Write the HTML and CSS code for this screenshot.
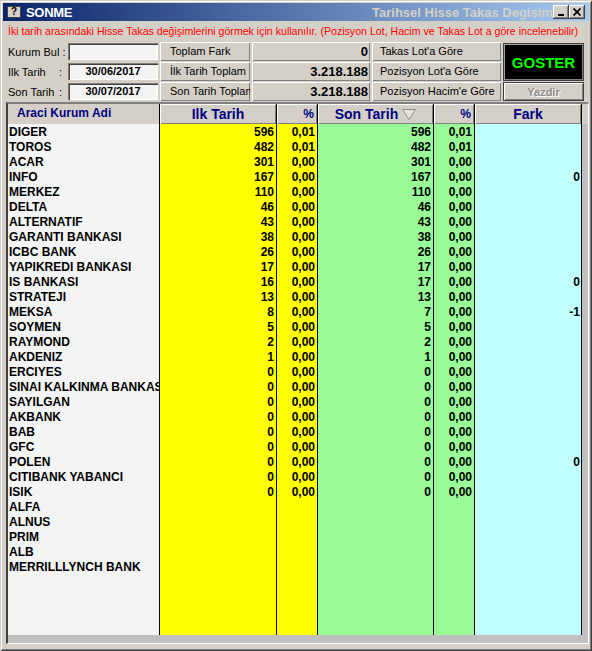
FILE: index.html
```html
<!DOCTYPE html>
<html lang="tr">
<head>
<meta charset="utf-8">
<title>SONME</title>
<link rel="stylesheet" href="styles.css">
</head>
<body>
<div class="window">
  <div class="titlebar">
    <div class="icon-wrap"><span class="app-icon">?</span></div>
    <span class="title">SONME</span>
    <span class="subtitle">Tarihsel Hisse Takas Degisimi</span>
    <div class="controls">
      <span class="ctl"><svg width="8" height="8" viewBox="0 0 8 8"><rect x="1" y="6" width="6" height="2" fill="#000"/></svg></span>
      <span class="ctl"><svg width="8" height="8" viewBox="0 0 8 8"><path d="M0.5 0.5L7.5 7.5M7.5 0.5L0.5 7.5" stroke="#000" stroke-width="1.7"/></svg></span>
    </div>
  </div>

  <p class="hint">İki tarih arasındaki Hisse Takas değişimlerini görmek için kullanılır. (Pozisyon Lot, Hacim ve Takas Lot a göre incelenebilir)</p>

  <div class="form">
    <span class="label">Kurum Bul :</span>
    <span class="field"></span>
    <span class="btn">Toplam Fark</span>
    <span class="value">0</span>
    <span class="btn btn-r">Takas Lot'a Göre</span>
    <span class="btn-go">GOSTER</span>

    <span class="label"><span class="label-text">Ilk Tarih</span>:</span>
    <span class="field">30/06/2017</span>
    <span class="btn">İlk Tarih Toplam</span>
    <span class="value">3.218.188</span>
    <span class="btn btn-r">Pozisyon Lot'a Göre</span>

    <span class="label"><span class="label-text">Son Tarih</span>:</span>
    <span class="field">30/07/2017</span>
    <span class="btn">Son Tarih Toplam</span>
    <span class="value">3.218.188</span>
    <span class="btn btn-r">Pozisyon Hacim'e Göre</span>
    <span class="btn-print">Yazdir</span>
  </div>

  <div class="grid">
    <div class="head">
      <span class="h-name">Araci Kurum Adi</span>
      <span class="hcell">Ilk Tarih</span>
      <span class="hcell pct">%</span>
      <span class="hcell">Son Tarih <svg class="sort" width="14" height="11" viewBox="0 0 14 11"><polygon points="0.5,0.5 13.5,0.5 7,10.5" fill="#e4e2dc" stroke="#8c8c8c"/></svg></span>
      <span class="hcell pct">%</span>
      <span class="hcell fark">Fark</span>
    </div>
    <div class="body">
      <div class="row"><span class="c-name">DIGER</span><span class="c-ilk">596</span><span class="c-ilk">0,01</span><span class="c-son">596</span><span class="c-son">0,01</span><span class="c-fark"></span></div>
      <div class="row"><span class="c-name">TOROS</span><span class="c-ilk">482</span><span class="c-ilk">0,01</span><span class="c-son">482</span><span class="c-son">0,01</span><span class="c-fark"></span></div>
      <div class="row"><span class="c-name">ACAR</span><span class="c-ilk">301</span><span class="c-ilk">0,00</span><span class="c-son">301</span><span class="c-son">0,00</span><span class="c-fark"></span></div>
      <div class="row"><span class="c-name">INFO</span><span class="c-ilk">167</span><span class="c-ilk">0,00</span><span class="c-son">167</span><span class="c-son">0,00</span><span class="c-fark">0</span></div>
      <div class="row"><span class="c-name">MERKEZ</span><span class="c-ilk">110</span><span class="c-ilk">0,00</span><span class="c-son">110</span><span class="c-son">0,00</span><span class="c-fark"></span></div>
      <div class="row"><span class="c-name">DELTA</span><span class="c-ilk">46</span><span class="c-ilk">0,00</span><span class="c-son">46</span><span class="c-son">0,00</span><span class="c-fark"></span></div>
      <div class="row"><span class="c-name">ALTERNATIF</span><span class="c-ilk">43</span><span class="c-ilk">0,00</span><span class="c-son">43</span><span class="c-son">0,00</span><span class="c-fark"></span></div>
      <div class="row"><span class="c-name">GARANTI BANKASI</span><span class="c-ilk">38</span><span class="c-ilk">0,00</span><span class="c-son">38</span><span class="c-son">0,00</span><span class="c-fark"></span></div>
      <div class="row"><span class="c-name">ICBC BANK</span><span class="c-ilk">26</span><span class="c-ilk">0,00</span><span class="c-son">26</span><span class="c-son">0,00</span><span class="c-fark"></span></div>
      <div class="row"><span class="c-name">YAPIKREDI BANKASI</span><span class="c-ilk">17</span><span class="c-ilk">0,00</span><span class="c-son">17</span><span class="c-son">0,00</span><span class="c-fark"></span></div>
      <div class="row"><span class="c-name">IS BANKASI</span><span class="c-ilk">16</span><span class="c-ilk">0,00</span><span class="c-son">17</span><span class="c-son">0,00</span><span class="c-fark">0</span></div>
      <div class="row"><span class="c-name">STRATEJI</span><span class="c-ilk">13</span><span class="c-ilk">0,00</span><span class="c-son">13</span><span class="c-son">0,00</span><span class="c-fark"></span></div>
      <div class="row"><span class="c-name">MEKSA</span><span class="c-ilk">8</span><span class="c-ilk">0,00</span><span class="c-son">7</span><span class="c-son">0,00</span><span class="c-fark">-1</span></div>
      <div class="row"><span class="c-name">SOYMEN</span><span class="c-ilk">5</span><span class="c-ilk">0,00</span><span class="c-son">5</span><span class="c-son">0,00</span><span class="c-fark"></span></div>
      <div class="row"><span class="c-name">RAYMOND</span><span class="c-ilk">2</span><span class="c-ilk">0,00</span><span class="c-son">2</span><span class="c-son">0,00</span><span class="c-fark"></span></div>
      <div class="row"><span class="c-name">AKDENIZ</span><span class="c-ilk">1</span><span class="c-ilk">0,00</span><span class="c-son">1</span><span class="c-son">0,00</span><span class="c-fark"></span></div>
      <div class="row"><span class="c-name">ERCIYES</span><span class="c-ilk">0</span><span class="c-ilk">0,00</span><span class="c-son">0</span><span class="c-son">0,00</span><span class="c-fark"></span></div>
      <div class="row"><span class="c-name">SINAI KALKINMA BANKASI</span><span class="c-ilk">0</span><span class="c-ilk">0,00</span><span class="c-son">0</span><span class="c-son">0,00</span><span class="c-fark"></span></div>
      <div class="row"><span class="c-name">SAYILGAN</span><span class="c-ilk">0</span><span class="c-ilk">0,00</span><span class="c-son">0</span><span class="c-son">0,00</span><span class="c-fark"></span></div>
      <div class="row"><span class="c-name">AKBANK</span><span class="c-ilk">0</span><span class="c-ilk">0,00</span><span class="c-son">0</span><span class="c-son">0,00</span><span class="c-fark"></span></div>
      <div class="row"><span class="c-name">BAB</span><span class="c-ilk">0</span><span class="c-ilk">0,00</span><span class="c-son">0</span><span class="c-son">0,00</span><span class="c-fark"></span></div>
      <div class="row"><span class="c-name">GFC</span><span class="c-ilk">0</span><span class="c-ilk">0,00</span><span class="c-son">0</span><span class="c-son">0,00</span><span class="c-fark"></span></div>
      <div class="row"><span class="c-name">POLEN</span><span class="c-ilk">0</span><span class="c-ilk">0,00</span><span class="c-son">0</span><span class="c-son">0,00</span><span class="c-fark">0</span></div>
      <div class="row"><span class="c-name">CITIBANK YABANCI</span><span class="c-ilk">0</span><span class="c-ilk">0,00</span><span class="c-son">0</span><span class="c-son">0,00</span><span class="c-fark"></span></div>
      <div class="row"><span class="c-name">ISIK</span><span class="c-ilk">0</span><span class="c-ilk">0,00</span><span class="c-son">0</span><span class="c-son">0,00</span><span class="c-fark"></span></div>
      <div class="row"><span class="c-name">ALFA</span><span class="c-ilk"></span><span class="c-ilk"></span><span class="c-son"></span><span class="c-son"></span><span class="c-fark"></span></div>
      <div class="row"><span class="c-name">ALNUS</span><span class="c-ilk"></span><span class="c-ilk"></span><span class="c-son"></span><span class="c-son"></span><span class="c-fark"></span></div>
      <div class="row"><span class="c-name">PRIM</span><span class="c-ilk"></span><span class="c-ilk"></span><span class="c-son"></span><span class="c-son"></span><span class="c-fark"></span></div>
      <div class="row"><span class="c-name">ALB</span><span class="c-ilk"></span><span class="c-ilk"></span><span class="c-son"></span><span class="c-son"></span><span class="c-fark"></span></div>
      <div class="row"><span class="c-name">MERRILLLYNCH BANK</span><span class="c-ilk"></span><span class="c-ilk"></span><span class="c-son"></span><span class="c-son"></span><span class="c-fark"></span></div>
      <div class="row filler"><span class="c-name"></span><span class="c-ilk"></span><span class="c-ilk"></span><span class="c-son"></span><span class="c-son"></span><span class="c-fark"></span></div>
    </div>
    <div class="foot"></div>
  </div>
</div>
</body>
</html>
```

FILE: styles.css
```css
* { box-sizing: border-box; }

body {
  margin: 0;
  font-family: "Liberation Sans", Arial, sans-serif;
  color: #000;
}

.window {
  width: 592px;
  height: 651px;
  padding: 3px;
  background: #d4d0c8;
  box-shadow: inset 1px 1px #d4d0c8, inset -1px -1px #404040, inset 2px 2px #fff, inset -2px -2px #808080;
  display: flex;
  flex-direction: column;
}

/* Title bar */
.titlebar {
  height: 18px;
  display: grid;
  grid-template-columns: 23px 346px 1fr auto;
  align-items: center;
  padding-right: 4px;
  background: linear-gradient(to right, #0a246a, #a6caf0);
}

.icon-wrap { padding-left: 4px; display: flex; }

.app-icon {
  width: 14px;
  height: 12px;
  background: #d4d0c8;
  border: 1px solid #404040;
  font-size: 10px;
  font-weight: bold;
  line-height: 10px;
  text-align: center;
}

.title {
  color: #fff;
  font-size: 13px;
  font-weight: bold;
  letter-spacing: -0.3px;
}

.subtitle {
  color: #d4d0c8;
  font-size: 13px;
  font-weight: bold;
  white-space: nowrap;
  overflow: hidden;
}

.controls { display: flex; }

.ctl {
  width: 16px;
  height: 14px;
  background: #d4d0c8;
  box-shadow: inset -1px -1px #404040, inset 1px 1px #fff, inset -2px -2px #808080;
  display: flex;
  align-items: center;
  justify-content: center;
}

/* Hint */
.hint {
  margin: 3px 0 0 5px;
  font-size: 10.6px;
  line-height: 14px;
  color: #f00;
  white-space: nowrap;
}

/* Form */
.form {
  margin: 4px 0 0 5px;
  display: grid;
  grid-template-columns: 58px 90px 90px 118px 129px 81px;
  grid-auto-rows: 19px;
  column-gap: 2px;
  row-gap: 1px;
  font-size: 11px;
}

.label {
  align-self: center;
  white-space: nowrap;
}

.label-text {
  display: inline-block;
  width: 51px;
}

.field {
  margin: 1px 0;
  background: #f4f4f4;
  box-shadow: inset 1px 1px #808080, inset 2px 2px #404040, inset -1px -1px #fff;
  font-weight: bold;
  text-align: center;
  line-height: 17px;
}

.btn, .value {
  background: #d4d0c8;
  box-shadow: inset 1px 1px #fff, inset -1px -1px #808080;
  white-space: nowrap;
  overflow: hidden;
  line-height: 19px;
}

.btn { padding-left: 10px; }
.btn-r { padding-left: 8px; }

.value {
  text-align: right;
  padding-right: 2px;
  font-size: 13px;
  font-weight: bold;
}

.btn-go {
  grid-column: 6;
  grid-row: 1 / span 2;
  margin-top: 1px;
  background: #000;
  border: 1px solid #404040;
  box-shadow: inset 1px 1px #a0a0a0, inset -1px -1px #808080;
  color: #00ff00;
  font-size: 15px;
  font-weight: bold;
  display: flex;
  align-items: center;
  justify-content: center;
}

.btn-print {
  grid-column: 6;
  background: #d4d0c8;
  border: 1px solid #404040;
  box-shadow: inset 1px 1px #fff, inset -1px -1px #808080;
  color: #8c8c8c;
  text-shadow: 1px 1px #fff;
  font-weight: bold;
  display: flex;
  align-items: center;
  justify-content: center;
}

/* Grid */
.grid {
  margin: 1px 0 0 3px;
  width: 583px;
  height: 542px;
  border-style: solid;
  border-width: 2px 1px 1px 2px;
  border-color: #808080 #fff #fff #404040;
  background: #c0c0c0;
  display: flex;
  flex-direction: column;
}

.head, .row {
  display: grid;
  grid-template-columns: 151px 117px 41px 116px 41px 108px;
}

.head {
  height: 20px;
  background: #d4d0c8;
}

.h-name {
  color: #000080;
  font-size: 12px;
  font-weight: bold;
  padding-left: 9px;
  line-height: 19px;
}

.hcell {
  border-left: 1px solid #000;
  box-shadow: inset 1px 1px #fff, inset -1px -1px #808080;
  color: #000080;
  font-size: 14px;
  font-weight: bold;
  text-align: center;
  line-height: 19px;
  display: flex;
  align-items: center;
  justify-content: center;
  gap: 4px;
}

.hcell.pct {
  font-size: 12px;
  justify-content: flex-end;
  padding-right: 3px;
}

.hcell.fark { border-right: 1px solid #000; }

.sort { flex: none; }

.body {
  flex: 1;
  display: flex;
  flex-direction: column;
}

.row {
  height: 15px;
  font-size: 12px;
  font-weight: bold;
  line-height: 15px;
}

.row:first-child { height: 16px; }
.row:first-child > span { padding-top: 1px; }

.row.filler {
  flex: 1;
  height: auto;
}

.row > span {
  overflow: hidden;
  white-space: nowrap;
}

.c-name {
  background: #f4f4f4;
  padding-left: 1px;
}

.c-ilk, .c-son, .c-fark {
  border-left: 1px solid #000;
  text-align: right;
  padding-right: 2px;
}

.c-ilk { background: #ffff00; }
.c-son { background: #98fb98; }
.c-fark {
  background: #c0ffff;
  border-right: 1px solid #000;
  padding-right: 1px;
}

.foot { height: 8px; }
```
